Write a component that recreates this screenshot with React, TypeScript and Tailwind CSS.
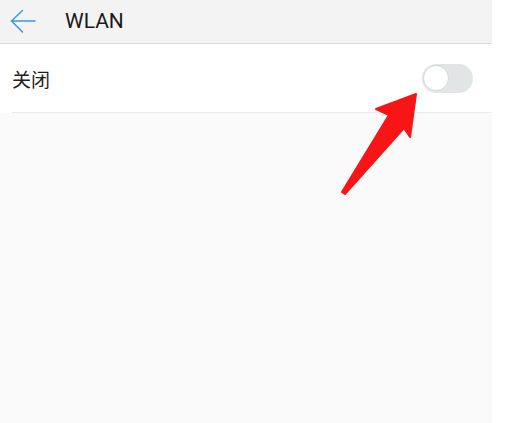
export default function App() {
  return (
    <div className="relative w-[509px] h-[423px] bg-white flex font-['Roboto','Noto_Sans_CJK_SC',sans-serif] overflow-hidden">
      <div className="w-[492px] h-full flex flex-col">
        <header className="h-[44px] bg-[#f3f3f3] border-b border-[#dadada] flex items-center">
          <svg width="26" height="26" viewBox="0 0 26 26" className="ml-[10px]" fill="none" stroke="#3d98d6" strokeWidth="1.5" strokeLinecap="round" strokeLinejoin="round">
            <path d="M1.5 12 H25" />
            <path d="M12.5 1.5 L1.5 12 L12.5 23" />
          </svg>
          <span className="ml-[29px] text-[21px] text-[#1a1a1a] leading-none">WLAN</span>
        </header>

        <div className="h-[68px] bg-white flex items-center justify-between pl-[12px] pr-[19px]">
          <span className="text-[19px] text-[#222] leading-none font-['Noto_Sans_CJK_SC',sans-serif]">关闭</span>
          <div className="w-[51px] h-[29px] rounded-full bg-[#e2e5e5] flex items-center px-[1px]">
            <div className="w-[26px] h-[26px] rounded-full bg-white border border-[#d6d9d9]" />
          </div>
        </div>
        <div className="bg-white">
          <div className="ml-[12px] h-px bg-[#e9e9e9]" />
        </div>

        <div className="flex-1 bg-[#fafafa]" />
      </div>

      <svg className="absolute left-0 top-0 pointer-events-none" width="509" height="423" viewBox="0 0 509 423">
        <polygon
          points="416,94 376,109 389,115 342,192 345,194 404,128 410,137"
          fill="#f71515"
          stroke="#f71515"
          strokeWidth="2"
          strokeLinejoin="round"
        />
      </svg>
    </div>
  );
}
